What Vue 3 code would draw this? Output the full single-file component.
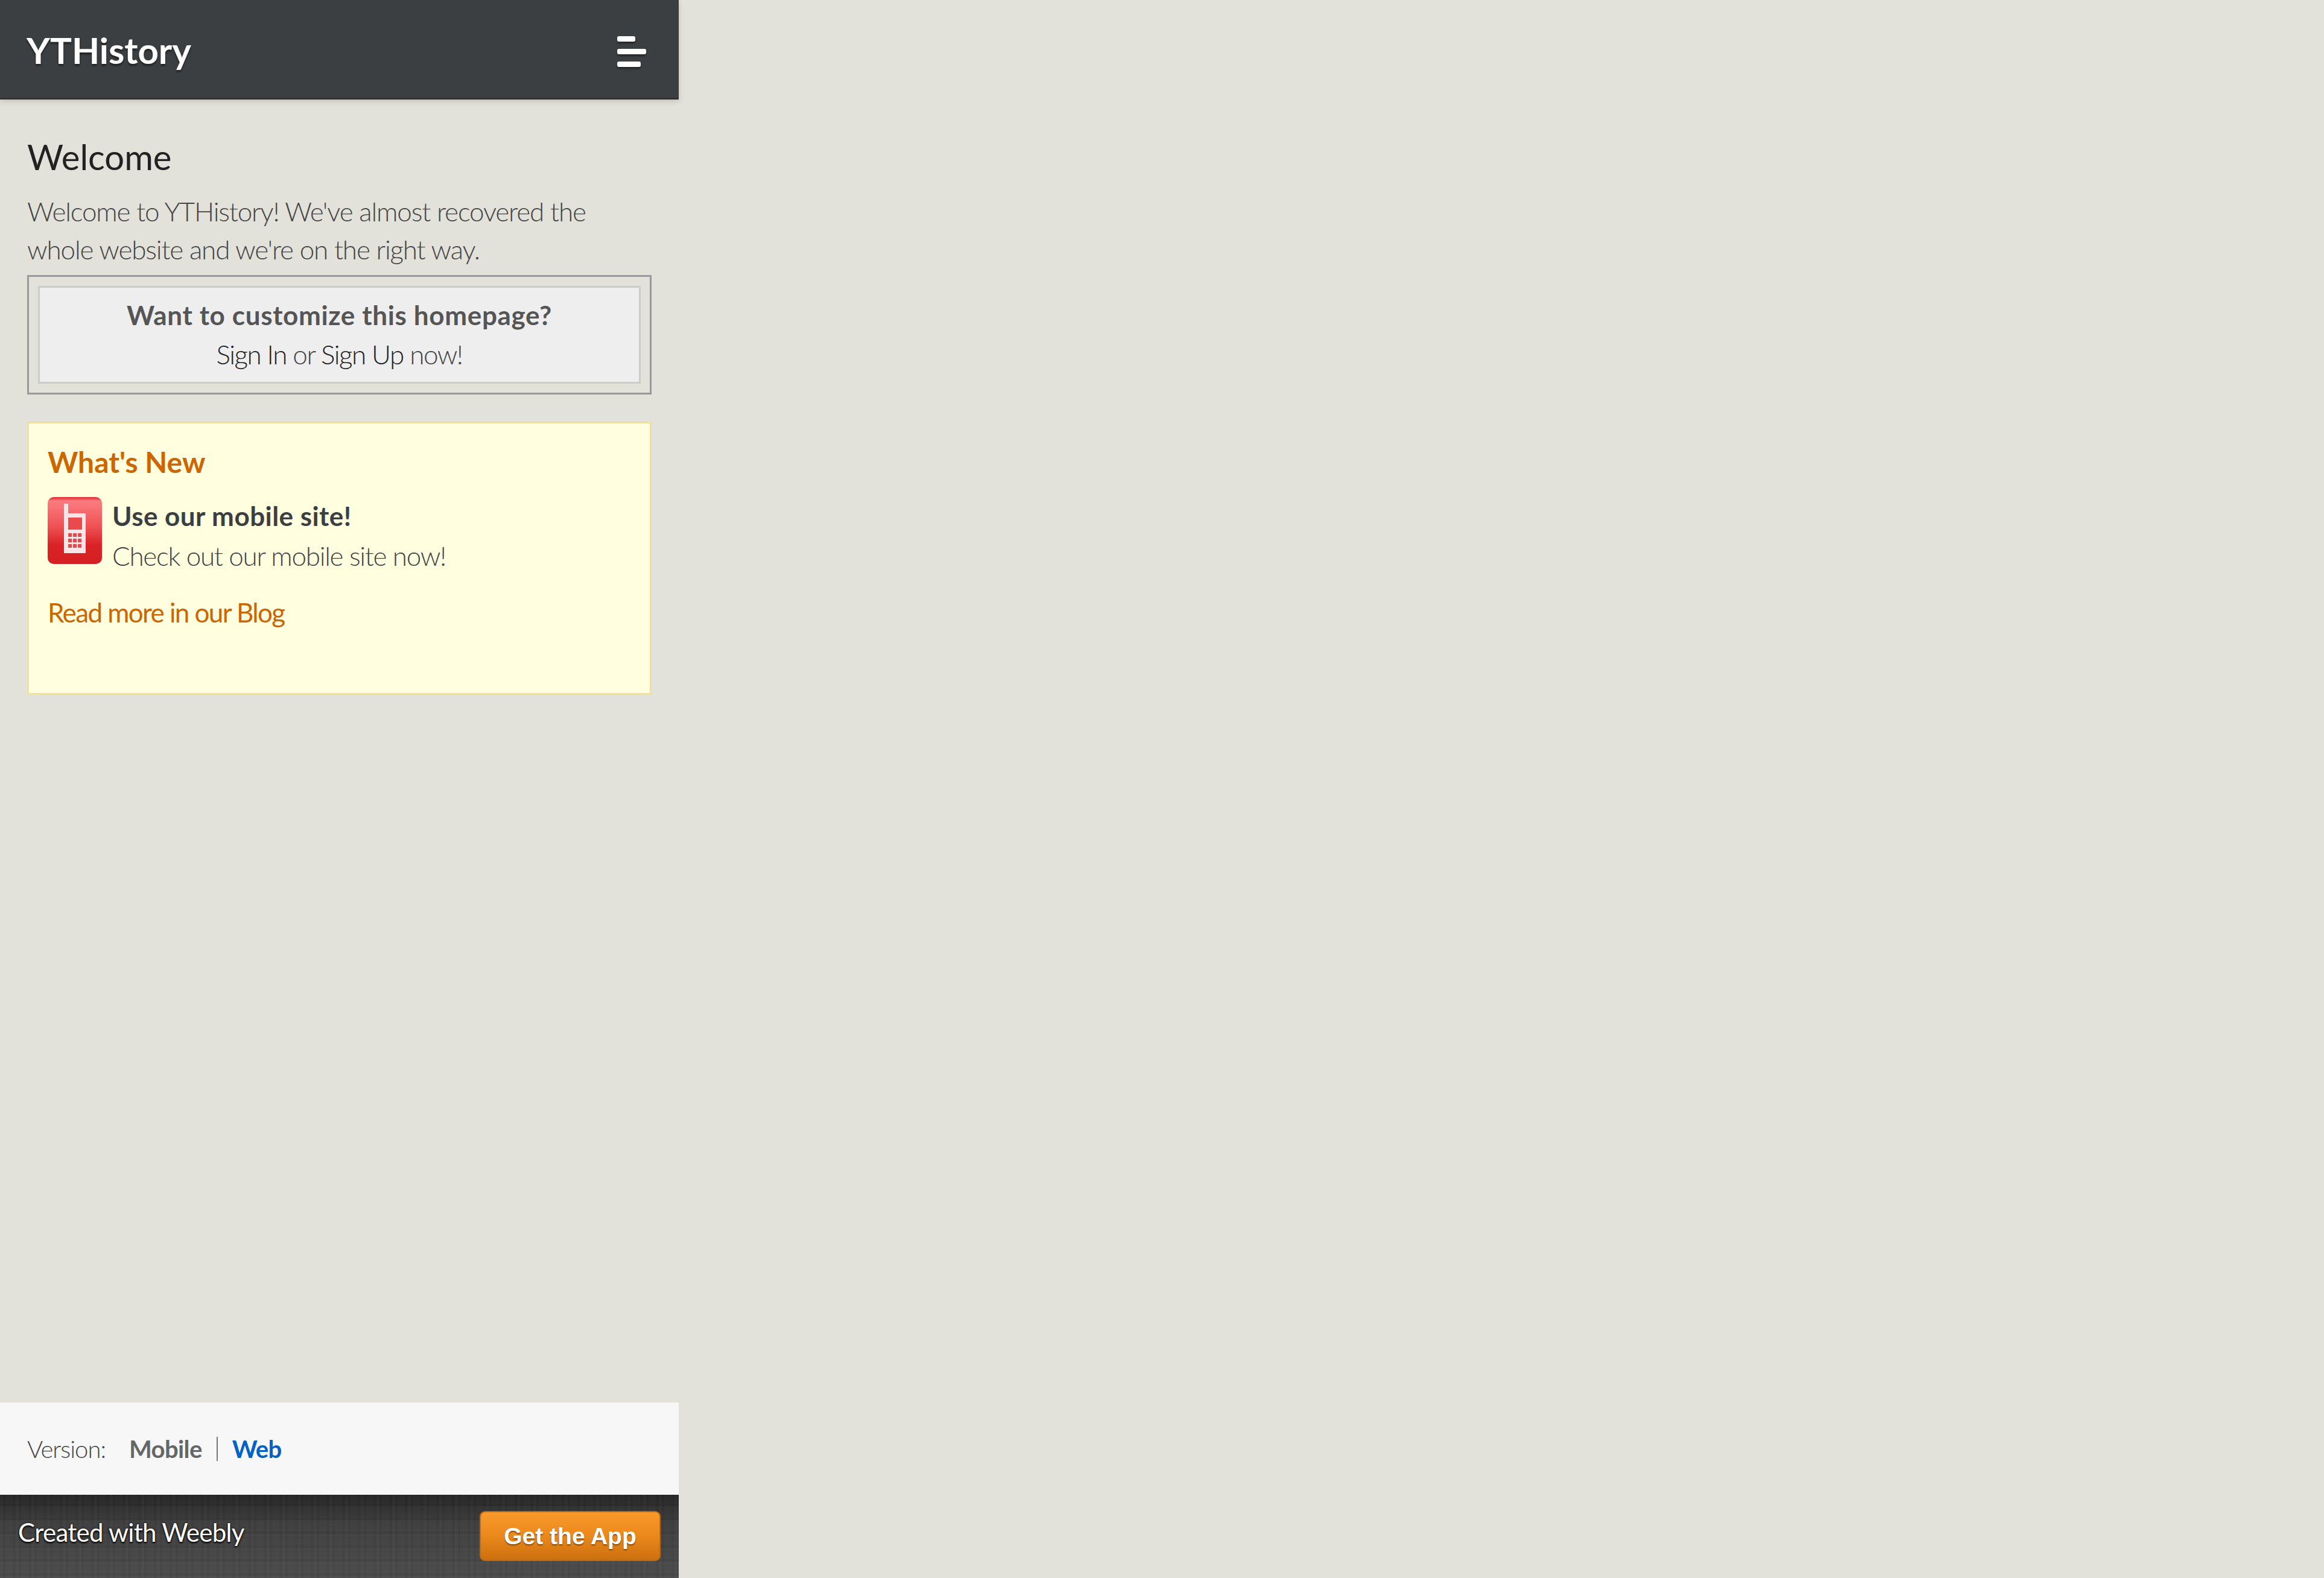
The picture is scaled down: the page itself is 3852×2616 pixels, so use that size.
<template>
  <div class="page">
    <header class="topbar">
      <span class="site-title">YTHistory</span>
      <button class="menu-button" aria-label="Menu">
        <span class="bar bar-short"></span>
        <span class="bar bar-long"></span>
        <span class="bar bar-mid"></span>
      </button>
    </header>

    <main class="content">
      <h2 class="page-title">Welcome</h2>
      <p class="intro">Welcome to YTHistory! We've almost recovered the<br>whole website and we're on the right way.</p>

      <div class="signin-box">
        <div class="signin-inner">
          <strong>Want to customize this homepage?</strong>
          <span><a href="#">Sign In</a> or <a href="#">Sign Up</a> now!</span>
        </div>
      </div>

      <section class="news">
        <h3>What's New</h3>
        <div class="news-item">
          <svg class="phone" viewBox="0 0 90 111" width="90" height="111">
            <defs>
              <linearGradient id="phoneBg" x1="0" y1="0" x2="0" y2="1">
                <stop offset="0" stop-color="#d92c30" />
                <stop offset="0.06" stop-color="#fb7c80" />
                <stop offset="0.45" stop-color="#ee5053" />
                <stop offset="0.72" stop-color="#d92226" />
                <stop offset="1" stop-color="#d42024" />
              </linearGradient>
            </defs>
            <rect width="90" height="111" rx="10" fill="url(#phoneBg)" />
            <path d="M27 11h7v16h29v66H27z" fill="#fbe4e6" />
            <rect x="34" y="34" width="23" height="20" fill="#ea4a4e" />
            <g fill="#e4484c">
              <rect v-for="k in keys" :key="k.id" :x="k.x" :y="k.y" width="6" height="6" />
            </g>
          </svg>
          <div class="news-text">
            <strong>Use our mobile site!</strong>
            <span>Check out our mobile site now!</span>
          </div>
        </div>
        <a class="blog-link" href="#">Read more in our Blog</a>
      </section>
    </main>

    <div class="version-bar">
      <span class="version-label">Version:</span>
      <a class="version-mobile" href="#">Mobile</a>
      <i class="divider"></i>
      <a class="version-web" href="#">Web</a>
    </div>

    <footer class="weebly-bar">
      <span class="created">Created with Weebly</span>
      <a class="get-app" href="#">Get the App</a>
    </footer>
  </div>
</template>

<script setup>
const keys = []
for (let r = 0; r < 3; r++) {
  for (let c = 0; c < 3; c++) {
    keys.push({ id: r * 3 + c, x: 34 + c * 8, y: 60 + r * 9 })
  }
}
</script>

<style>
html, body {
  margin: 0;
  background: #e2e2da;
}
</style>

<style scoped>
.page {
  width: 1125px;
  min-height: 2616px;
  display: flex;
  flex-direction: column;
  font-family: Lato, "Noto Sans", sans-serif;
  font-weight: 300;
  font-size: 44px;
  color: #444;
}

.topbar {
  height: 165px;
  box-sizing: border-box;
  border-bottom: 3px solid #333;
  background: #3c3f42;
  box-shadow: 0 3px 9px rgba(0, 0, 0, 0.15);
  display: flex;
  align-items: center;
  justify-content: space-between;
  padding: 4px 54px 0 44px;
}

.site-title {
  font-size: 60px;
  font-weight: 700;
  color: #fff;
  text-shadow: 0 3px 3px rgba(0, 0, 0, 0.5);
}

.menu-button {
  background: none;
  border: none;
  padding: 0;
  margin-top: 5px;
  width: 48px;
  display: flex;
  flex-direction: column;
  gap: 12px;
}

.bar {
  display: block;
  height: 9px;
  border-radius: 3px;
  background: #fff;
  box-shadow: 0 3px 3px rgba(0, 0, 0, 0.4);
}
.bar-short { width: 30px; }
.bar-long { width: 48px; }
.bar-mid { width: 39px; }

.content {
  flex: 1;
  padding: 0 45px;
}

.page-title {
  margin: 63px 0 0;
  font-size: 58px;
  line-height: 64px;
  font-weight: 400;
  color: #222;
}

.intro {
  margin: 27px 0 0;
  line-height: 63px;
  letter-spacing: -1.15px;
}

.signin-box {
  margin-top: 11px;
  border: 3px solid #999;
  padding: 15px;
}

.signin-inner {
  border: 3px solid #ccc;
  background: #eee;
  height: 162px;
  box-sizing: border-box;
  display: flex;
  flex-direction: column;
  align-items: center;
  padding-top: 13px;
  line-height: 65px;
}

.signin-inner strong {
  font-weight: 700;
  color: #555;
  letter-spacing: 0.65px;
}

.signin-inner span {
  letter-spacing: -1.5px;
}

.signin-inner a {
  color: #222;
  text-decoration: none;
}

.news {
  margin-top: 45px;
  height: 453px;
  box-sizing: border-box;
  border: 3px solid #f5e08e;
  background: #ffffe0;
  padding: 31px 31px;
}

.news h3 {
  margin: 0;
  font-size: 48px;
  line-height: 66px;
  font-weight: 700;
  color: #c60;
}

.news-item {
  margin-top: 25px;
  display: flex;
  gap: 17px;
}

.phone {
  flex: none;
}

.news-text {
  display: flex;
  flex-direction: column;
  line-height: 66px;
  margin-top: -2px;
}

.news-text strong {
  font-weight: 700;
  color: #3c3f42;
  letter-spacing: 0.45px;
}

.news-text span {
  letter-spacing: -1.3px;
}

.blog-link {
  display: block;
  margin-top: 28px;
  color: #c60;
  font-weight: 400;
  text-decoration: none;
  line-height: 66px;
  letter-spacing: -1.6px;
}

.version-bar {
  height: 153px;
  background: #f7f7f7;
  display: flex;
  align-items: center;
  padding-left: 45px;
  font-size: 40px;
}

.version-label {
  width: 169px;
  color: #444;
  letter-spacing: -1px;
}

.version-mobile,
.version-web {
  font-weight: 700;
  text-decoration: none;
}

.version-mobile {
  color: #666;
  letter-spacing: -0.6px;
}

.divider {
  width: 2px;
  height: 40px;
  background: #777;
  margin: 0 24px 0 24px;
}

.version-web {
  color: #0561c4;
  letter-spacing: -0.6px;
}

.weebly-bar {
  height: 138px;
  box-sizing: border-box;
  padding: 0 30px 14px 30px;
  display: flex;
  align-items: center;
  justify-content: space-between;
  background:
    repeating-linear-gradient(90deg, rgba(255, 255, 255, 0.02) 0 5px, rgba(0, 0, 0, 0.025) 5px 9px, rgba(255, 255, 255, 0.01) 9px 21px, rgba(0, 0, 0, 0.02) 21px 26px),
    repeating-linear-gradient(0deg, rgba(255, 255, 255, 0.02) 0 4px, rgba(0, 0, 0, 0.03) 4px 8px, rgba(255, 255, 255, 0.01) 8px 23px),
    linear-gradient(#232323, #3d3d3d 35%, #4a4a4a);
}

.created {
  color: #fff;
  font-size: 42px;
  font-weight: 400;
  letter-spacing: -0.7px;
  text-shadow: 0 0 3px #000, 0 2px 3px #000;
}

.get-app {
  width: 300px;
  height: 83px;
  margin-top: 13px;
  box-sizing: border-box;
  border: 2px solid #b96a12;
  border-radius: 9px;
  background: linear-gradient(#f89a2b, #ed8a1d 45%, #cb6f0e);
  color: #fff;
  font-family: "Liberation Sans", Arial, sans-serif;
  font-weight: 700;
  font-size: 39px;
  display: flex;
  align-items: center;
  justify-content: center;
  text-decoration: none;
  text-shadow: 0 2px 2px rgba(0, 0, 0, 0.45);
}
</style>
